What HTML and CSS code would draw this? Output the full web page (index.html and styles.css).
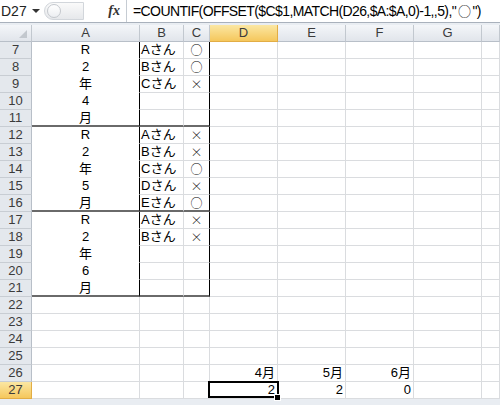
FILE: index.html
```html
<!DOCTYPE html>
<html lang="ja">
<head>
  <meta charset="UTF-8">
  <title>COUNTIF / OFFSET</title>
  <link rel="stylesheet" href="styles.css">
</head>
<body>
  <div class="formula-bar">
    <div class="namebox">D27<span class="drop"></span></div>
    <div class="grip"><span class="knob"></span></div>
    <div class="fx">fx</div>
    <div class="formula">=COUNTIF(OFFSET($C$1,MATCH(D26,$A:$A,0)-1,,5),"<span class="cj">○</span>")</div>
  </div>

  <div class="sheet">
    <div class="hd corner"></div>
    <div class="hd">A</div><div class="hd">B</div><div class="hd">C</div>
    <div class="hd on">D</div><div class="hd">E</div><div class="hd">F</div><div class="hd">G</div><div class="hd"></div>

    <div class="rh">7</div><div class="c a">R</div><div class="c b">Aさん</div><div class="c m">○</div><div class="c"></div><div class="c"></div><div class="c"></div><div class="c"></div><div class="c"></div>
    <div class="rh">8</div><div class="c a">2</div><div class="c b">Bさん</div><div class="c m">○</div><div class="c"></div><div class="c"></div><div class="c"></div><div class="c"></div><div class="c"></div>
    <div class="rh">9</div><div class="c a">年</div><div class="c b">Cさん</div><div class="c m">×</div><div class="c"></div><div class="c"></div><div class="c"></div><div class="c"></div><div class="c"></div>
    <div class="rh">10</div><div class="c a">4</div><div class="c b"></div><div class="c m"></div><div class="c"></div><div class="c"></div><div class="c"></div><div class="c"></div><div class="c"></div>
    <div class="rh">11</div><div class="c a end">月</div><div class="c b end"></div><div class="c m end"></div><div class="c"></div><div class="c"></div><div class="c"></div><div class="c"></div><div class="c"></div>

    <div class="rh">12</div><div class="c a">R</div><div class="c b">Aさん</div><div class="c m">×</div><div class="c"></div><div class="c"></div><div class="c"></div><div class="c"></div><div class="c"></div>
    <div class="rh">13</div><div class="c a">2</div><div class="c b">Bさん</div><div class="c m">×</div><div class="c"></div><div class="c"></div><div class="c"></div><div class="c"></div><div class="c"></div>
    <div class="rh">14</div><div class="c a">年</div><div class="c b">Cさん</div><div class="c m">○</div><div class="c"></div><div class="c"></div><div class="c"></div><div class="c"></div><div class="c"></div>
    <div class="rh">15</div><div class="c a">5</div><div class="c b">Dさん</div><div class="c m">×</div><div class="c"></div><div class="c"></div><div class="c"></div><div class="c"></div><div class="c"></div>
    <div class="rh">16</div><div class="c a end">月</div><div class="c b end">Eさん</div><div class="c m end">○</div><div class="c"></div><div class="c"></div><div class="c"></div><div class="c"></div><div class="c"></div>

    <div class="rh">17</div><div class="c a">R</div><div class="c b">Aさん</div><div class="c m">×</div><div class="c"></div><div class="c"></div><div class="c"></div><div class="c"></div><div class="c"></div>
    <div class="rh">18</div><div class="c a">2</div><div class="c b">Bさん</div><div class="c m">×</div><div class="c"></div><div class="c"></div><div class="c"></div><div class="c"></div><div class="c"></div>
    <div class="rh">19</div><div class="c a">年</div><div class="c b"></div><div class="c m"></div><div class="c"></div><div class="c"></div><div class="c"></div><div class="c"></div><div class="c"></div>
    <div class="rh">20</div><div class="c a">6</div><div class="c b"></div><div class="c m"></div><div class="c"></div><div class="c"></div><div class="c"></div><div class="c"></div><div class="c"></div>
    <div class="rh">21</div><div class="c a end">月</div><div class="c b end"></div><div class="c m end"></div><div class="c"></div><div class="c"></div><div class="c"></div><div class="c"></div><div class="c"></div>

    <div class="rh">22</div><div class="c"></div><div class="c"></div><div class="c"></div><div class="c"></div><div class="c"></div><div class="c"></div><div class="c"></div><div class="c"></div>
    <div class="rh">23</div><div class="c"></div><div class="c"></div><div class="c"></div><div class="c"></div><div class="c"></div><div class="c"></div><div class="c"></div><div class="c"></div>
    <div class="rh">24</div><div class="c"></div><div class="c"></div><div class="c"></div><div class="c"></div><div class="c"></div><div class="c"></div><div class="c"></div><div class="c"></div>
    <div class="rh">25</div><div class="c"></div><div class="c"></div><div class="c"></div><div class="c"></div><div class="c"></div><div class="c"></div><div class="c"></div><div class="c"></div>
    <div class="rh">26</div><div class="c"></div><div class="c"></div><div class="c"></div><div class="c num">4月</div><div class="c num">5月</div><div class="c num">6月</div><div class="c"></div><div class="c"></div>
    <div class="rh on">27</div><div class="c"></div><div class="c"></div><div class="c"></div><div class="c num sel">2</div><div class="c num">2</div><div class="c num">0</div><div class="c"></div><div class="c"></div>
  </div>
</body>
</html>
```

FILE: styles.css
```css
body {
  margin: 0;
  width: 500px;
  height: 405px;
  overflow: hidden;
  background: #e9edf2;
  font-family: "Liberation Sans", "Noto Sans CJK JP", sans-serif;
  color: #000;
}

/* formula bar */
.formula-bar {
  display: flex;
  height: 22px;
  background: #fff;
  border-bottom: 1px solid #a9b1bc;
  margin-bottom: 2px;
}
.namebox {
  width: 40px;
  display: flex;
  align-items: center;
  padding-left: 1px;
  font-size: 14px;
  color: #222;
}
.namebox .drop {
  margin-left: 5px;
  border-left: 4px solid transparent;
  border-right: 4px solid transparent;
  border-top: 4px solid #333;
}
.grip {
  width: 36px;
  margin: 2px 0 2px 3px;
  border: 1px solid #d2d6db;
  border-radius: 9px 0 0 9px;
  background: linear-gradient(#fafafa, #e6e8eb);
  display: flex;
  align-items: center;
  padding-left: 2px;
}
.grip .knob {
  width: 12px;
  height: 12px;
  border-radius: 50%;
  border: 1px solid #c4c8cd;
  background: linear-gradient(#fff, #eceef1);
}
.fx {
  width: 36px;
  text-align: right;
  padding-right: 6px;
  font-family: "Liberation Serif", serif;
  font-style: italic;
  font-weight: bold;
  font-size: 14px;
  line-height: 22px;
  color: #333;
  border-right: 1px solid #c6ccd3;
}
.formula {
  flex: 1;
  padding-left: 6px;
  font-size: 14px;
  letter-spacing: -0.6px;
  line-height: 22px;
  white-space: nowrap;
  overflow: hidden;
}
.formula .cj {
  font-family: "Noto Sans CJK JP", sans-serif;
  font-weight: 300;
  font-size: 13px;
  margin: 0 2px;
}

/* grid */
.sheet {
  display: grid;
  grid-template-columns: 32px 108px 44px 26px 68px 68px 68px 68px 1fr;
  grid-auto-rows: 17px;
  background: #fff;
}
.hd, .rh, .c {
  box-sizing: border-box;
  white-space: nowrap;
  overflow: hidden;
}
.hd {
  background: linear-gradient(#f4f6f9, #e1e5eb);
  border-right: 1px solid #c2c8cf;
  border-bottom: 1px solid #b8bfc8;
  color: #3b3b3b;
  font-size: 13px;
  line-height: 16px;
  text-align: center;
}
.hd.corner {
  position: relative;
}
.hd.corner::after {
  content: "";
  position: absolute;
  right: 4px;
  bottom: 3px;
  border-left: 8px solid transparent;
  border-bottom: 8px solid #c3c8ce;
}
.rh {
  background: #e4e8ed;
  border-right: 1px solid #b8bfc8;
  border-bottom: 1px solid #c8cdd3;
  color: #3b3b3b;
  font-size: 13px;
  line-height: 16px;
  text-align: center;
}
.hd.on, .rh.on {
  background: linear-gradient(#fbe7a3, #f5c75c);
  border-color: #e2ad45;
}

.c {
  border-right: 1px solid #dadcdf;
  border-bottom: 1px solid #dadcdf;
  font-size: 13px;
  line-height: 16px;
  padding: 0 2px;
}
.c.a {
  text-align: center;
  border-bottom-color: #fff;
  border-right-color: #000;
}
.c.b {
  padding-left: 1px;
}
.c.m {
  text-align: center;
  font-family: "Noto Sans CJK JP", sans-serif;
  font-size: 12px;
  font-weight: 300;
  border-right-color: #000;
}
.c.end {
  border-bottom: 2px solid #6a6a6a;
}
.c.num {
  text-align: right;
}
.c.sel {
  position: relative;
  overflow: visible;
  z-index: 1;
}
.c.sel::before {
  content: "";
  position: absolute;
  top: -1px;
  left: -2px;
  right: -2px;
  bottom: 0;
  border: 2px solid #000;
}
.c.sel::after {
  content: "";
  position: absolute;
  right: -4px;
  bottom: -3px;
  width: 5px;
  height: 5px;
  background: #000;
  border: 1px solid #fff;
}
```
